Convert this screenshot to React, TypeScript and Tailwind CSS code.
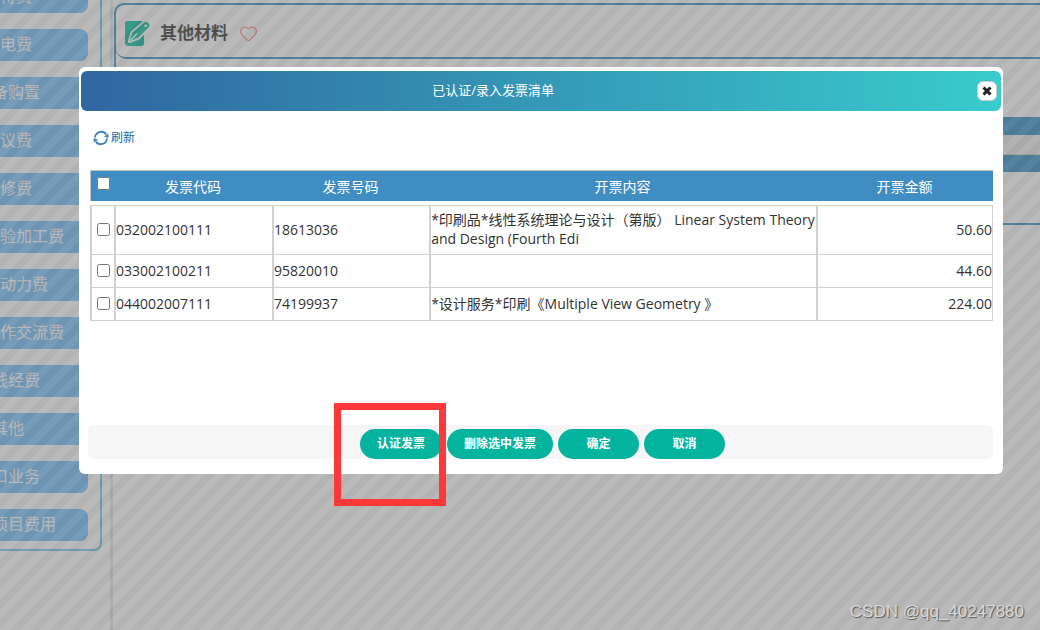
import { useState } from "react";
import { Heart } from "lucide-react";

const CATEGORIES = [
  "招待费",
  "水电费",
  "设备购置",
  "会议费",
  "维修费",
  "测试化验加工费",
  "燃料动力费",
  "国际合作交流费",
  "实践经费",
  "其他",
  "窗口业务",
  "其他项目费用",
];

const INVOICES = [
  {
    code: "032002100111",
    number: "18613036",
    content: "*印刷品*线性系统理论与设计（第版） Linear System Theory and Design (Fourth Edi",
    amount: "50.60",
  },
  { code: "033002100211", number: "95820010", content: "", amount: "44.60" },
  {
    code: "044002007111",
    number: "74199937",
    content: "*设计服务*印刷《Multiple View Geometry 》",
    amount: "224.00",
  },
];

const ACTIONS = ["认证发票", "删除选中发票", "确定", "取消"];

function EditIcon() {
  return (
    <svg width="26" height="26" viewBox="0 0 26 26" className="shrink-0">
      <rect x="0" y="1" width="19" height="25" rx="3" fill="#00bd9f" />
      <path
        d="M19.200 2.600a2.600 2.600 0 0 1 3.600 0l1 1a2.600 2.600 0 0 1 0 3.600L13.600 17.600l-9 3.600 2.800-8.800z"
        fill="#00bd9f"
        stroke="#fff"
        strokeWidth="3.600"
        strokeLinejoin="round"
        paintOrder="stroke"
      />
      <path d="M5.500 20.500L12 13.400" stroke="#fff" strokeWidth="1.400" />
      <circle cx="20.600" cy="5.800" r="1.300" fill="#fff" />
    </svg>
  );
}

function RefreshIcon() {
  return (
    <svg width="16" height="16" viewBox="0 0 16 16" fill="none" className="shrink-0">
      <path d="M2 7.500A6.100 6.100 0 0 1 13.200 4.600" stroke="#3f82c4" strokeWidth="1.800" />
      <path d="M14 8.500A6.100 6.100 0 0 1 2.800 11.400" stroke="#3f82c4" strokeWidth="1.800" />
      <path d="M15.400 8V3.600L11 6.400z" fill="#3f82c4" />
      <path d="M.6 8v4.400L5 9.600z" fill="#3f82c4" />
    </svg>
  );
}

function Sidebar() {
  return (
    <aside className="-mt-[29px] -ml-[86px] flex w-[188px] shrink-0 flex-col gap-4 self-start rounded-lg border-2 border-[#74c4f0] px-3 py-2">
      {CATEGORIES.map((name) => (
        <button
          key={name}
          className="h-8 rounded-lg bg-[#76c2ff] pb-0.5 text-center text-base whitespace-nowrap text-white"
        >
          {name}
        </button>
      ))}
    </aside>
  );
}

function MaterialPanel() {
  return (
    <section className="mt-[3px] h-[222px] flex-1 self-start rounded-l-[10px] border-y-2 border-l-2 border-[#338fc8]">
      <header className="flex h-[54px] items-center rounded-bl-[10px] border-b-2 border-[#338fc8] pt-1 pl-[9px]">
        <EditIcon />
        <h2 className="ml-[9px] text-[17px] font-bold text-[#2f2f2f]">其他材料</h2>
        <Heart size={19} strokeWidth={1.5} className="ml-[11px] text-[#ff8078]" />
      </header>
      <div className="mt-[58px] h-[18px] bg-[#338fc8]" />
      <div className="h-5 border-b border-[#cfd8b8] bg-[#eeeeee]" />
      <div className="h-[17px] bg-[#338fc8]" />
    </section>
  );
}

function InvoiceTable() {
  const [checked, setChecked] = useState<string[]>([]);
  const allChecked = checked.length === INVOICES.length;

  const toggle = (code: string) =>
    setChecked((prev) =>
      prev.includes(code) ? prev.filter((c) => c !== code) : [...prev, code]
    );

  return (
    <table className="w-full table-fixed border-separate border-spacing-0 text-sm leading-[19px] text-[#333333]">
      <colgroup>
        <col className="w-6" />
        <col className="w-[17.5%]" />
        <col className="w-[17.4%]" />
        <col />
        <col className="w-[19.6%]" />
      </colgroup>
      <thead>
        <tr className="h-[31px] bg-[#3f8dc2] text-white [&>th]:border-t [&>th]:border-[#c5c5c5] [&>th]:font-normal">
          <th className="border-l pb-1.5 pl-px align-middle">
            <input
              type="checkbox"
              aria-label="全选"
              checked={allChecked}
              onChange={() => setChecked(allChecked ? [] : INVOICES.map((i) => i.code))}
              className="mx-auto block size-[13px]"
            />
          </th>
          <th>发票代码</th>
          <th>发票号码</th>
          <th>开票内容</th>
          <th>开票金额</th>
        </tr>
      </thead>
      <tbody>
        <tr className="h-1" aria-hidden="true">
          <td colSpan={5} />
        </tr>
        {INVOICES.map((inv, i) => (
          <tr
            key={inv.code}
            className={`h-[33px] [&>td]:border-b [&>td]:border-l-2 [&>td]:border-[#d0d0d0] [&>td]:pt-1 [&>td]:pb-1.5 ${
              i === 0 ? "[&>td]:border-t" : ""
            }`}
          >
            <td>
              <input
                type="checkbox"
                aria-label={inv.code}
                checked={checked.includes(inv.code)}
                onChange={() => toggle(inv.code)}
                className="mx-auto block size-[13px]"
              />
            </td>
            <td>{inv.code}</td>
            <td>{inv.number}</td>
            <td>{inv.content}</td>
            <td className="border-r text-right">{inv.amount}</td>
          </tr>
        ))}
      </tbody>
    </table>
  );
}

function InvoiceDialog() {
  return (
    <div
      role="dialog"
      aria-label="已认证/录入发票清单"
      className="rounded-md bg-white px-0.5 pt-1 pb-[15px]"
    >
      {/* Title bar */}
      <div className="flex h-10 items-center justify-between rounded-md bg-linear-to-r from-[#3066a0] to-[#38cccc] pr-1">
        <h1 className="w-[90%] text-center text-[13px] text-white">
          已认证/录入发票清单
        </h1>
        <button
          aria-label="关闭"
          className="flex size-5 items-center justify-center rounded-md border border-[#cccccc] bg-white"
        >
          <svg width="12" height="12" viewBox="0 0 12 12">
            <path d="M2.500 2.500l7 7M9.500 2.500l-7 7" stroke="#222222" strokeWidth="3" />
          </svg>
        </button>
      </div>

      {/* Toolbar */}
      <div className="mt-[17px] pl-3">
        <button className="flex h-5 items-center gap-0.5 text-xs text-[#1b6aa5]">
          <RefreshIcon />
          刷新
        </button>
      </div>

      <div className="mt-[22px] min-h-[255px] pr-2 pl-[9px]">
        <InvoiceTable />
      </div>

      {/* Footer */}
      <div className="mr-2 ml-[7px] flex justify-center gap-[5px] rounded-md bg-[#f6f6f6] pt-1 pl-1">
        {ACTIONS.map((label) => (
          <button
            key={label}
            className="h-[30px] min-w-[81px] rounded-full bg-[#04b49f] px-[17px] text-xs font-bold text-white"
          >
            {label}
          </button>
        ))}
      </div>
    </div>
  );
}

export default function App() {
  return (
    <div className="relative min-h-screen overflow-hidden bg-white font-['Open_Sans','Noto_Sans_CJK_SC',sans-serif]">
      {/* Page behind the dialog */}
      <div className="absolute inset-0 flex overflow-hidden">
        <Sidebar />
        <div className="mr-px ml-2 w-[3px] shrink-0 bg-[#e4e4e4]" />
        <MaterialPanel />
      </div>

      {/* Striped overlay */}
      <div className="absolute inset-0 bg-[linear-gradient(135deg,#666666_25%,#757575_25%,#757575_50%,#666666_50%,#666666_75%,#757575_75%)] bg-[length:20px_20px] opacity-50" />

      <div className="relative pt-[67px] pr-[37px] pl-[79px]">
        <InvoiceDialog />
      </div>

      {/* Highlight around the certify button */}
      <div className="pointer-events-none absolute top-[403px] left-[334px] h-[103px] w-28 border-[7px] border-[#fc3838]" />

      <div className="absolute right-4 bottom-2 font-['Liberation_Sans',sans-serif] text-[17px] leading-5 text-[#d8d8d8] [text-shadow:1px_1px_1px_#555555]">
        CSDN @qq_40247880
      </div>
    </div>
  );
}
